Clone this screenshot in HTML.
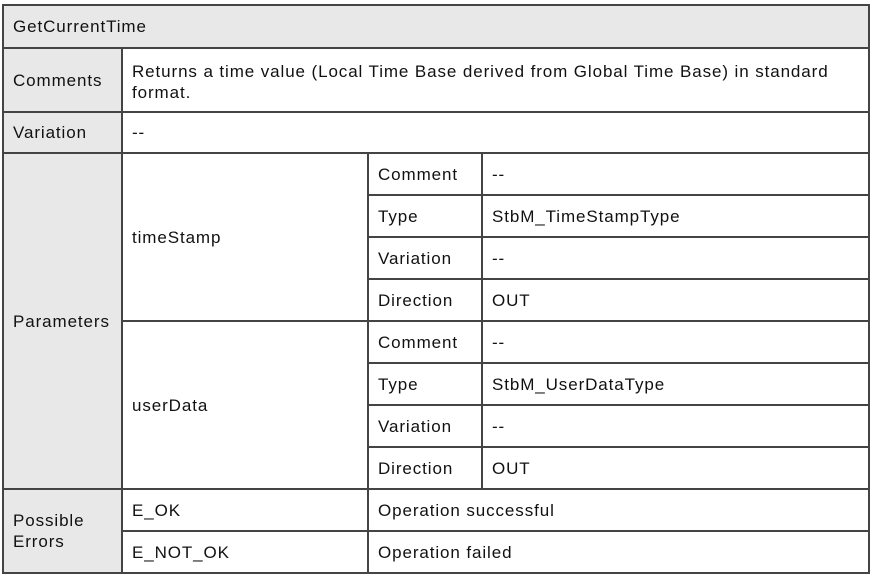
<!DOCTYPE html>
<html><head><meta charset="utf-8"><style>
body{margin:0;width:876px;height:577px;background:#fff;position:relative;overflow:hidden;font-family:"Liberation Sans",sans-serif;font-size:17px;letter-spacing:0.9px;color:#111}
.c{position:absolute;box-sizing:border-box;border:2px solid #444;display:flex;align-items:center;padding-left:9px;line-height:21px;background:#fff}
.g{background:#e8e8e8}
</style></head><body>
<div class="c g" style="left:2px;top:4px;width:868px;height:45px">GetCurrentTime</div>
<div class="c g" style="left:2px;top:47px;width:121px;height:66px">Comments</div>
<div class="c" style="left:121px;top:47px;width:749px;height:66px;padding-right:20px;padding-top:3px">Returns a time value (Local Time Base derived from Global Time Base) in standard format.</div>
<div class="c g" style="left:2px;top:111px;width:121px;height:43px">Variation</div>
<div class="c" style="left:121px;top:111px;width:749px;height:43px">--</div>
<div class="c g" style="left:2px;top:152px;width:121px;height:338px">Parameters</div>
<div class="c" style="left:121px;top:152px;width:248px;height:170px">timeStamp</div>
<div class="c" style="left:121px;top:320px;width:248px;height:170px">userData</div>

<div class="c" style="left:367px;top:152px;width:116px;height:44px">Comment</div>
<div class="c" style="left:481px;top:152px;width:389px;height:44px">--</div>
<div class="c" style="left:367px;top:194px;width:116px;height:44px">Type</div>
<div class="c" style="left:481px;top:194px;width:389px;height:44px">StbM_TimeStampType</div>
<div class="c" style="left:367px;top:236px;width:116px;height:44px">Variation</div>
<div class="c" style="left:481px;top:236px;width:389px;height:44px">--</div>
<div class="c" style="left:367px;top:278px;width:116px;height:44px">Direction</div>
<div class="c" style="left:481px;top:278px;width:389px;height:44px">OUT</div>
<div class="c" style="left:367px;top:320px;width:116px;height:44px">Comment</div>
<div class="c" style="left:481px;top:320px;width:389px;height:44px">--</div>
<div class="c" style="left:367px;top:362px;width:116px;height:44px">Type</div>
<div class="c" style="left:481px;top:362px;width:389px;height:44px">StbM_UserDataType</div>
<div class="c" style="left:367px;top:404px;width:116px;height:44px">Variation</div>
<div class="c" style="left:481px;top:404px;width:389px;height:44px">--</div>
<div class="c" style="left:367px;top:446px;width:116px;height:44px">Direction</div>
<div class="c" style="left:481px;top:446px;width:389px;height:44px">OUT</div>

<div class="c g" style="left:2px;top:488px;width:121px;height:86px">Possible<br>Errors</div>
<div class="c" style="left:121px;top:488px;width:248px;height:44px">E_OK</div>
<div class="c" style="left:367px;top:488px;width:503px;height:44px">Operation successful</div>
<div class="c" style="left:121px;top:530px;width:248px;height:44px">E_NOT_OK</div>
<div class="c" style="left:367px;top:530px;width:503px;height:44px">Operation failed</div>
</body></html>
